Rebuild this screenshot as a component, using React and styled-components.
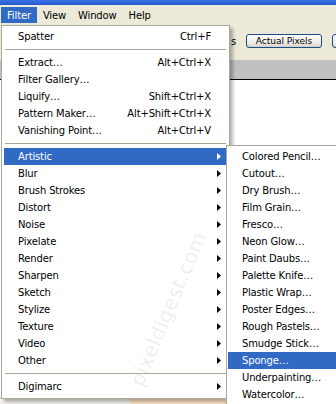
import React from "react";
import styled, { createGlobalStyle } from "styled-components";

const Global = createGlobalStyle`
  html, body { margin: 0; padding: 0; background: #ECE9D8; }
  body { width: 336px; height: 404px; overflow: hidden; }
`;

const FONT = `"DejaVu Sans", Verdana, sans-serif`;

const Root = styled.div`
  position: relative;
  width: 336px;
  height: 404px;
  overflow: hidden;
  display: flex;
  flex-direction: column;
  font-family: ${FONT};
  font-size: 10px;
  letter-spacing: -0.15px;
  color: #000;
  background: #ECE9D8;
`;

const TitleStrip = styled.div`
  flex: none;
  height: 5px;
  background: linear-gradient(#3A72E0, #2358D2);
`;

const MenuBar = styled.div`
  flex: none;
  height: 20px;
  display: flex;
  align-items: flex-start;
  padding-left: 1px;
  background: #ECE9D8;
`;

const BarItem = styled.div`
  height: 16px;
  margin-top: 2px;
  padding: 0 6px;
  display: flex;
  align-items: center;
  background: ${(p) => (p.$active ? "#316AC5" : "transparent")};
  color: ${(p) => (p.$active ? "#fff" : "#000")};
`;

const OptionsBar = styled.div`
  flex: none;
  height: 35px;
  display: flex;
  align-items: center;
  padding-left: 231px;
  background: #ECE9D8;
`;

const OptLabel = styled.div`
  flex: none;
  width: 5px;
  white-space: nowrap;
  margin-top: -3px;
`;

const XpButton = styled.div`
  flex: none;
  width: ${(p) => p.$w}px;
  height: 12px;
  margin-left: ${(p) => p.$ml}px;
  margin-top: -3px;
  border: 1px solid #1C4C88;
  border-radius: 3px;
  background: linear-gradient(#FFFFFF, #ECEBE6 70%, #D6D0C5);
  font-size: 9px;
  letter-spacing: 0;
  display: flex;
  align-items: center;
  justify-content: center;
  white-space: nowrap;
  overflow: hidden;
`;

const DocTitle = styled.div`
  flex: none;
  height: 19px;
  background: #C0C0C0;
  border-bottom: 1px solid #000;
`;

const Canvas = styled.div`
  flex: 1;
  display: flex;
  flex-direction: column;
  background: #FFFFFF;
`;

const CanvasFill = styled.div`
  flex: 1;
`;

const BottomStrip = styled.div`
  height: 6px;
  border-top: 1px solid #D8D2C4;
  background: linear-gradient(90deg, #F3F1EA 0, #F3F1EA 130px, #FCE3C2 130px);
`;

const Menu = styled.div`
  position: absolute;
  left: ${(p) => p.$x}px;
  top: ${(p) => p.$y}px;
  width: ${(p) => p.$w}px;
  box-sizing: border-box;
  background: #FFFFFF;
  border: 1px solid #ACA899;
  padding: ${(p) => p.$pad};
  box-shadow: 3px 3px 3px rgba(0, 0, 0, 0.28);
  z-index: ${(p) => p.$z};
`;

const Item = styled.div`
  height: 17px;
  display: flex;
  align-items: center;
  justify-content: space-between;
  padding: 0 6px 0 14px;
  white-space: nowrap;
  background: ${(p) => (p.$active ? "#316AC5" : "transparent")};
  color: ${(p) => (p.$active ? "#FFFFFF" : "#000000")};
`;

const Shortcut = styled.span`
  padding-right: 10px;
`;

const Separator = styled.div`
  height: 9px;
  display: flex;
  align-items: center;
  &::after {
    content: "";
    flex: 1;
    height: 1px;
    margin: 0 1px;
    background: #ACA899;
  }
`;

const Watermark = styled.div`
  position: absolute;
  left: 168px;
  top: 309px;
  transform: translate(-50%, -50%) rotate(-67deg);
  font-family: ${FONT};
  font-size: 20px;
  letter-spacing: 0.5px;
  color: rgba(120, 120, 120, 0.13);
  white-space: nowrap;
  pointer-events: none;
  z-index: 10;
`;

const Arrow = ({ color }) => (
  <svg width="4" height="7" viewBox="0 0 4 7">
    <path d="M0 0 L4 3.5 L0 7 Z" fill={color} />
  </svg>
);

const mainItems = [
  { t: "Spatter", k: "Ctrl+F" },
  "sep",
  { t: "Extract…", k: "Alt+Ctrl+X" },
  { t: "Filter Gallery…" },
  { t: "Liquify…", k: "Shift+Ctrl+X" },
  { t: "Pattern Maker…", k: "Alt+Shift+Ctrl+X" },
  { t: "Vanishing Point…", k: "Alt+Ctrl+V" },
  "sep",
  { t: "Artistic", sub: true, active: true },
  { t: "Blur", sub: true },
  { t: "Brush Strokes", sub: true },
  { t: "Distort", sub: true },
  { t: "Noise", sub: true },
  { t: "Pixelate", sub: true },
  { t: "Render", sub: true },
  { t: "Sharpen", sub: true },
  { t: "Sketch", sub: true },
  { t: "Stylize", sub: true },
  { t: "Texture", sub: true },
  { t: "Video", sub: true },
  { t: "Other", sub: true },
  "sep",
  { t: "Digimarc", sub: true },
];

const subItems = [
  "Colored Pencil…",
  "Cutout…",
  "Dry Brush…",
  "Film Grain…",
  "Fresco…",
  "Neon Glow…",
  "Paint Daubs…",
  "Palette Knife…",
  "Plastic Wrap…",
  "Poster Edges…",
  "Rough Pastels…",
  "Smudge Stick…",
  "Sponge…",
  "Underpainting…",
  "Watercolor…",
];

export default function App() {
  return (
    <>
      <Global />
      <Root>
        <TitleStrip />
        <MenuBar>
          <BarItem $active>Filter</BarItem>
          <BarItem>View</BarItem>
          <BarItem>Window</BarItem>
          <BarItem>Help</BarItem>
        </MenuBar>
        <OptionsBar>
          <OptLabel>s</OptLabel>
          <XpButton $w={74} $ml={10}>Actual Pixels</XpButton>
          <XpButton $w={60} $ml={10} />
        </OptionsBar>
        <DocTitle />
        <Canvas>
          <CanvasFill />
          <BottomStrip />
        </Canvas>

        <Menu $x={1} $y={25} $w={229} $pad="2px 2px 3px" $z={2}>
          {mainItems.map((it, i) =>
            it === "sep" ? (
              <Separator key={i} />
            ) : (
              <Item key={i} $active={it.active}>
                <span>{it.t}</span>
                {it.k && <Shortcut>{it.k}</Shortcut>}
                {it.sub && <Arrow color={it.active ? "#fff" : "#000"} />}
              </Item>
            )
          )}
        </Menu>

        <Menu $x={226} $y={145} $w={118} $pad="2px 1px 3px" $z={3}>
          {subItems.map((t) => (
            <Item key={t} $active={t === "Sponge…"}>
              <span>{t}</span>
            </Item>
          ))}
        </Menu>

        <Watermark>pixeldigest.com</Watermark>
      </Root>
    </>
  );
}
